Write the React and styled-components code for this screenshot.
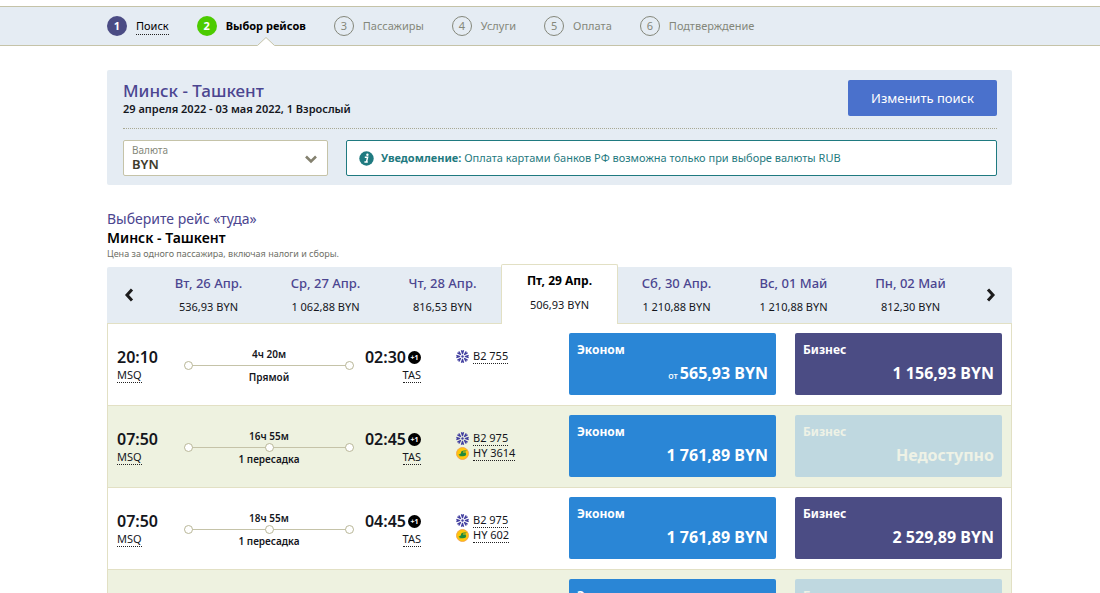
import React from "react";
import styled, { createGlobalStyle, css } from "styled-components";

const color = {
  panel: "#e5ecf3",
  sand: "#c5c3a8",
  line: "#e2e0c4",
  indigo: "#4b4c84",
  heading: "#4b4590",
  ink: "#14161c",
  muted: "#84877a",
  green: "#4ccb00",
  blue: "#4a71cc",
  economy: "#2a86d6",
  unavailable: "#bfd8e0",
  teal: "#1f7a80",
  stripe: "#eef2e0",
};

const GlobalStyle = createGlobalStyle`
  * { box-sizing: border-box; }
  html { scrollbar-width: none; }
  body {
    margin: 0;
    background: #fff;
    color: ${color.ink};
    font-family: "Noto Sans", "Open Sans", sans-serif;
    font-size: 12px;
    line-height: 16px;
  }
  button, select { font-family: inherit; margin: 0; }
  h1, h2, p, ol, ul { margin: 0; padding: 0; }
  ol, ul { list-style: none; }
  a { color: inherit; text-decoration: none; }
`;

const Page = styled.div`
  padding-top: 6px;
`;

const StepBar = styled.nav`
  padding: 0 87px 0 107px;
  background: ${color.panel};
  border-top: 1px solid ${color.sand};
  border-bottom: 1px solid ${color.sand};
`;

const StepList = styled.ol`
  display: flex;
  gap: 28px;
`;

const StepItem = styled.li`
  position: relative;
  display: flex;
  align-items: center;
  gap: 9px;
  height: 38px;
  color: ${(p) => (p.$state === "todo" ? color.muted : "#000")};
  font-size: 11px;
  font-weight: ${(p) => (p.$state === "current" ? 700 : 400)};
  white-space: nowrap;
`;

const StepNumber = styled.span`
  width: 20px;
  height: 20px;
  border-radius: 50%;
  line-height: 20px;
  text-align: center;
  font-weight: 700;
  color: #fff;
  background: ${(p) => (p.$state === "current" ? color.green : color.indigo)};
  ${(p) =>
    p.$state === "todo" &&
    css`
      border: 1px solid ${color.muted};
      background: transparent;
      color: ${color.muted};
      font-weight: 400;
      line-height: 18px;
    `}
`;

const DottedLink = styled.a`
  border-bottom: 1px dotted #222;
`;

const Notch = styled.svg`
  position: absolute;
  left: 50%;
  bottom: -1px;
  margin-left: 6px;
  width: 18px;
  height: 9px;
`;

const Content = styled.main`
  padding: 24px 88px 0 107px;
`;

const SearchPanel = styled.section`
  padding: 10px 15px 9px 16px;
  background: ${color.panel};
  border-radius: 2px;
`;

const SearchTop = styled.div`
  display: flex;
  justify-content: space-between;
  align-items: flex-start;
  padding-bottom: 12px;
  border-bottom: 1px dotted #a9a993;
`;

const RouteTitle = styled.h1`
  font-size: 17px;
  line-height: 22px;
  font-weight: 500;
  color: ${color.heading};
`;

const RouteDates = styled.p`
  font-size: 11px;
  line-height: 14px;
  font-weight: 600;
`;

const ChangeButton = styled.button`
  width: 149px;
  height: 36px;
  border: 0;
  border-radius: 2px;
  background: ${color.blue};
  color: #fff;
  font-size: 13px;
  font-weight: 400;
`;

const SearchBottom = styled.div`
  display: flex;
  gap: 18px;
  padding-top: 11px;
`;

const CurrencyField = styled.div`
  position: relative;
  width: 205px;
  height: 36px;

  label {
    position: absolute;
    left: 9px;
    top: 3px;
    font-size: 10px;
    line-height: 14px;
    color: ${color.muted};
    pointer-events: none;
  }
  select {
    width: 100%;
    height: 100%;
    padding: 12px 8px 0;
    appearance: none;
    border: 1px solid ${color.sand};
    border-radius: 2px;
    background: #fff;
    color: #3e3b2c;
    font-size: 13px;
    font-weight: 600;
  }
  svg {
    position: absolute;
    right: 11px;
    top: 15px;
    pointer-events: none;
  }
`;

const Notice = styled.p`
  flex: 1;
  display: flex;
  align-items: center;
  gap: 7px;
  height: 36px;
  padding: 0 12px;
  border: 1px solid ${color.teal};
  border-radius: 2px;
  background: #fff;
  color: ${color.teal};
  font-size: 11px;
`;

const FlightHeader = styled.header`
  padding: 24px 0 6px;
`;

const Prompt = styled.p`
  font-size: 14px;
  line-height: 20px;
  color: ${color.heading};
`;

const Direction = styled.h2`
  font-size: 14px;
  line-height: 18px;
  font-weight: 600;
  color: #000;
`;

const PriceNote = styled.p`
  font-size: 9px;
  line-height: 14px;
  color: #6f7168;
`;

const DateStrip = styled.div`
  display: grid;
  grid-template-columns: 43px repeat(7, 1fr) 43px;
  height: 57px;
  background: ${color.panel};
  border-radius: 2px 2px 0 0;
  border-bottom: 1px solid ${color.line};
`;

const ArrowButton = styled.button`
  display: grid;
  place-items: center;
  padding: 0;
  border: 0;
  background: none;
`;

const DateTab = styled.button`
  display: flex;
  flex-direction: column;
  align-items: center;
  gap: 8px;
  padding: 8px 0 0;
  border: 0;
  background: none;
  color: ${color.ink};
  font-size: 11px;
  line-height: 16px;
  white-space: nowrap;

  strong {
    font-size: ${(p) => (p.$active ? "12px" : "13px")};
    font-weight: ${(p) => (p.$active ? 700 : 500)};
    color: ${(p) => (p.$active ? "#000" : color.heading)};
  }
  ${(p) =>
    p.$active &&
    css`
      margin: -3px 0 -1px;
      border: 1px solid ${color.line};
      border-bottom: 0;
      border-radius: 2px 2px 0 0;
      background: #fff;
    `}
`;

const FlightList = styled.ul`
  border: solid ${color.line};
  border-width: 0 1px;
`;

const FlightRow = styled.li`
  display: flex;
  padding: 9px 9px 10px;
  border-bottom: 1px solid ${color.line};
  background: ${(p) => (p.$striped ? color.stripe : "#fff")};
`;

const Stop = styled.div`
  display: flex;
  flex-direction: column;
  align-items: ${(p) => (p.$end ? "flex-end" : "flex-start")};
  width: 56px;
  padding-top: 14px;
`;

const Time = styled.div`
  display: flex;
  align-items: center;
  gap: 2px;
  font-size: 16px;
  line-height: 20px;
  font-weight: 600;
`;

const DayBadge = styled.span`
  width: 13px;
  height: 13px;
  border-radius: 50%;
  background: #000;
  color: #fff;
  font-size: 7px;
  line-height: 13px;
  font-weight: 700;
  text-align: center;
`;

const Airport = styled(DottedLink)`
  font-size: 11px;
  line-height: 15px;
`;

const Leg = styled.div`
  display: flex;
  flex-direction: column;
  width: 170px;
  margin: 0 11px;
  padding-top: 14px;
  text-align: center;
  font-size: 10px;
  line-height: 14px;
  font-weight: 600;
`;

const Track = styled.div`
  display: flex;
  justify-content: space-between;
  align-items: center;
  height: 9px;
  background: linear-gradient(${color.sand}, ${color.sand}) center / 100% 1px no-repeat;
`;

const Dot = styled.span`
  width: 9px;
  height: 9px;
  border: 1px solid #b9b798;
  border-radius: 50%;
  background: #fff;
`;

const Carriers = styled.div`
  display: flex;
  flex-direction: column;
  padding: 16px 0 0 35px;
`;

const Carrier = styled.div`
  display: flex;
  align-items: center;
  gap: 4px;
  height: 15px;
  font-size: 11px;
  line-height: 14px;

  a { white-space: nowrap; }
`;

const Fares = styled.div`
  display: flex;
  gap: 19px;
  margin-left: auto;
`;

const Fare = styled.button`
  display: flex;
  flex-direction: column;
  justify-content: space-between;
  width: 207px;
  height: 62px;
  padding: 8px 8px 10px;
  border: 0;
  border-radius: 2px;
  background: ${(p) => p.$tone};
  color: ${(p) => (p.disabled ? "#eef2e6" : "#fff")};
  text-align: left;
  font-size: 12px;
  line-height: 18px;
  font-weight: 700;
`;

const Amount = styled.span`
  align-self: flex-end;
  font-size: 16px;
  line-height: 24px;
  font-weight: 700;

  small {
    margin-right: 2px;
    font-size: 9px;
    line-height: 9px;
    font-weight: 500;
  }
`;

const Chevron = ({ d, width, height, stroke, weight }) => (
  <svg width={width} height={height} viewBox={`0 0 ${width} ${height}`} fill="none" aria-hidden="true">
    <path d={d} stroke={stroke} strokeWidth={weight} />
  </svg>
);

const InfoIcon = () => (
  <svg width="15" height="15" viewBox="0 0 15 15" aria-hidden="true">
    <circle cx="7.5" cy="7.5" r="7.2" fill={color.teal} />
    <circle cx="8.4" cy="3.7" r="1.2" fill="#fff" />
    <path d="M5.8 6.3h2.8L7.5 10.9h1.3M5.4 10.9h2.1" fill="none" stroke="#fff" strokeWidth="1.5" />
  </svg>
);

const BelaviaLogo = () => (
  <svg width="13" height="13" viewBox="-6.5 -6.5 13 13" aria-hidden="true">
    {[0, 45, 90, 135, 180, 225, 270, 315].map((a) => (
      <path
        key={a}
        transform={`rotate(${a})`}
        d="M-.5 -2.3L-1.7 -5.9L-.5 -6.4L0 -5.4L.5 -6.4L1.7 -5.9L.5 -2.3Z"
        fill="#4340a0"
      />
    ))}
    <circle r="1.2" fill="#4340a0" />
  </svg>
);

const UzbekistanLogo = () => (
  <svg width="13" height="13" viewBox="0 0 13 13" aria-hidden="true">
    <circle cx="6.5" cy="6.5" r="6" fill="#ffc60a" stroke="#f4a04a" strokeWidth=".9" />
    <path
      d="M2.2 7.4C3.6 7.5 4.5 7 5 6.1C4.8 4.5 5.8 3.5 8.3 3.4L11 3.6L9.3 4.6H7.2L6.8 5.5L10 5.6L9.6 6.3L10.3 6.5L9.8 7.3L10.2 7.6C9.8 9 8.6 9.4 6.5 9.3H3.6L2.8 8.6H4.7Z"
      fill="#1f8a3c"
    />
  </svg>
);

const steps = [
  ["Поиск", "done"],
  ["Выбор рейсов", "current"],
  ["Пассажиры", "todo"],
  ["Услуги", "todo"],
  ["Оплата", "todo"],
  ["Подтверждение", "todo"],
];

const dates = [
  ["Вт, 26 Апр.", "536,93 BYN"],
  ["Ср, 27 Апр.", "1 062,88 BYN"],
  ["Чт, 28 Апр.", "816,53 BYN"],
  ["Пт, 29 Апр.", "506,93 BYN"],
  ["Сб, 30 Апр.", "1 210,88 BYN"],
  ["Вс, 01 Май", "1 210,88 BYN"],
  ["Пн, 02 Май", "812,30 BYN"],
];

const flights = [
  { dep: "20:10", arr: "02:30", time: "4ч 20м", via: "Прямой", stops: 0, codes: ["B2 755"], eco: "565,93 BYN", from: true, biz: "1 156,93 BYN" },
  { dep: "07:50", arr: "02:45", time: "16ч 55м", via: "1 пересадка", stops: 1, codes: ["B2 975", "HY 3614"], eco: "1 761,89 BYN" },
  { dep: "07:50", arr: "04:45", time: "18ч 55м", via: "1 пересадка", stops: 1, codes: ["B2 975", "HY 602"], eco: "1 761,89 BYN", biz: "2 529,89 BYN" },
  { dep: "07:50", arr: "04:45", time: "18ч 55м", via: "1 пересадка", stops: 1, codes: ["B2 975", "HY 602"], eco: "1 761,89 BYN" },
];

const Flight = ({ flight, striped }) => (
  <FlightRow $striped={striped}>
    <Stop>
      <Time>{flight.dep}</Time>
      <Airport href="#msq">MSQ</Airport>
    </Stop>
    <Leg>
      <span>{flight.time}</span>
      <Track>
        <Dot />
        {flight.stops > 0 && <Dot />}
        <Dot />
      </Track>
      <span>{flight.via}</span>
    </Leg>
    <Stop $end>
      <Time>
        {flight.arr}
        <DayBadge>+1</DayBadge>
      </Time>
      <Airport href="#tas">TAS</Airport>
    </Stop>
    <Carriers>
      {flight.codes.map((code) => (
        <Carrier key={code}>
          {code.startsWith("B2") ? <BelaviaLogo /> : <UzbekistanLogo />}
          <DottedLink href="#flight">{code}</DottedLink>
        </Carrier>
      ))}
    </Carriers>
    <Fares>
      <Fare $tone={color.economy}>
        <span>Эконом</span>
        <Amount>
          {flight.from && <small>от</small>}
          {flight.eco}
        </Amount>
      </Fare>
      <Fare $tone={flight.biz ? color.indigo : color.unavailable} disabled={!flight.biz}>
        <span>Бизнес</span>
        <Amount>{flight.biz || "Недоступно"}</Amount>
      </Fare>
    </Fares>
  </FlightRow>
);

export default function App() {
  return (
    <Page>
      <GlobalStyle />
      <StepBar>
        <StepList>
          {steps.map(([name, state], i) => (
            <StepItem key={name} $state={state}>
              <StepNumber $state={state}>{i + 1}</StepNumber>
              {state === "done" ? <DottedLink href="#search">{name}</DottedLink> : <span>{name}</span>}
              {state === "current" && (
                <Notch viewBox="0 0 18 9" aria-hidden="true">
                  <path d="M0 9L9 0.5L18 9Z" fill="#fff" />
                  <path d="M0.5 8.5L9 0.5L17.5 8.5" fill="none" stroke={color.sand} />
                </Notch>
              )}
            </StepItem>
          ))}
        </StepList>
      </StepBar>
      <Content>
        <SearchPanel>
          <SearchTop>
            <div>
              <RouteTitle>Минск - Ташкент</RouteTitle>
              <RouteDates>29 апреля 2022 - 03 мая 2022, 1 Взрослый</RouteDates>
            </div>
            <ChangeButton>Изменить поиск</ChangeButton>
          </SearchTop>
          <SearchBottom>
            <CurrencyField>
              <select id="currency" defaultValue="BYN">
                <option>BYN</option>
                <option>RUB</option>
              </select>
              <label htmlFor="currency">Валюта</label>
              <Chevron d="M1 1.5L6 6.5L11 1.5" width={12} height={9} stroke="#84816f" weight={2.6} />
            </CurrencyField>
            <Notice>
              <InfoIcon />
              <span>
                <b>Уведомление:</b> Оплата картами банков РФ возможна только при выборе валюты RUB
              </span>
            </Notice>
          </SearchBottom>
        </SearchPanel>
        <FlightHeader>
          <Prompt>Выберите рейс «туда»</Prompt>
          <Direction>Минск - Ташкент</Direction>
          <PriceNote>Цена за одного пассажира, включая налоги и сборы.</PriceNote>
        </FlightHeader>
        <DateStrip>
          <ArrowButton aria-label="Предыдущие даты">
            <Chevron d="M8 1.5L3 7L8 12.5" width={10} height={14} stroke="#1c1c1c" weight={3} />
          </ArrowButton>
          {dates.map(([day, price], i) => (
            <DateTab key={day} $active={i === 3}>
              <strong>{day}</strong>
              <span>{price}</span>
            </DateTab>
          ))}
          <ArrowButton aria-label="Следующие даты">
            <Chevron d="M2 1.5L7 7L2 12.5" width={10} height={14} stroke="#1c1c1c" weight={3} />
          </ArrowButton>
        </DateStrip>
        <FlightList>
          {flights.map((flight, i) => (
            <Flight key={i} flight={flight} striped={i % 2 === 1} />
          ))}
        </FlightList>
      </Content>
    </Page>
  );
}
